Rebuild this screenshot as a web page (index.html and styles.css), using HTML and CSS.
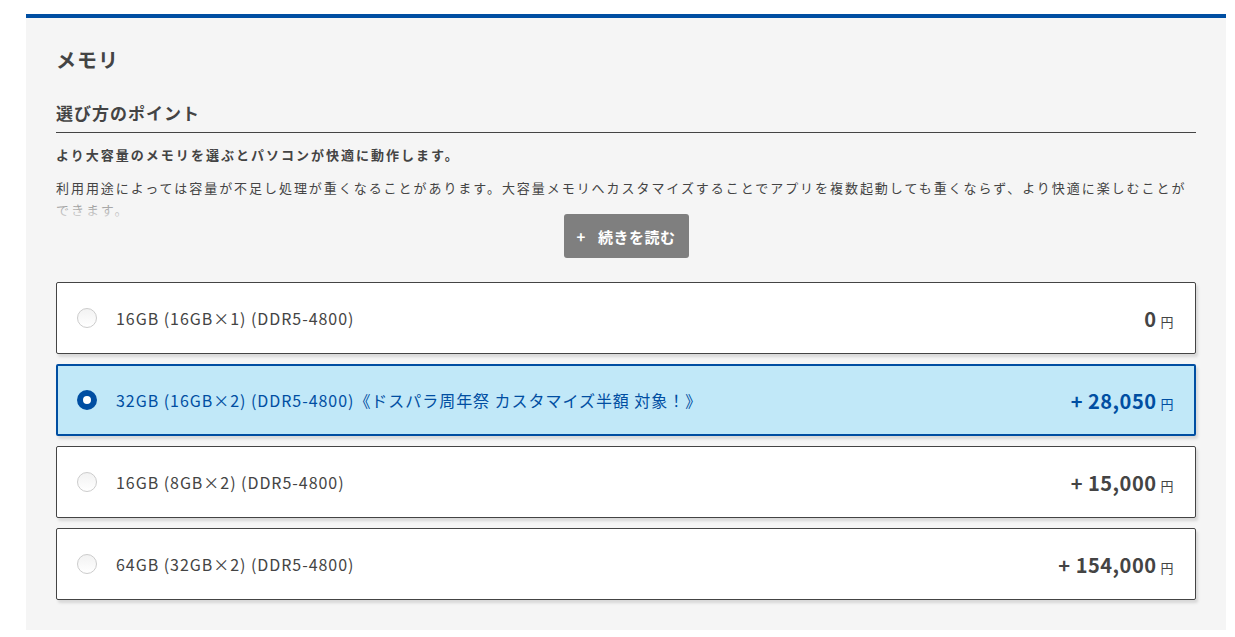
FILE: index.html
```html
<!DOCTYPE html>
<html>

<head>
    <title>メモリ</title>
    <meta charset="utf-8">
    <link rel="stylesheet" href="styles.css">
</head>

<body>
    <div class="custom-box">
        <h2 class="custom-title">メモリ</h2>
        <h3 class="point-title">選び方のポイント</h3>
        <p class="point-lead">より大容量のメモリを選ぶとパソコンが快適に動作します。</p>
        <div class="point-text">
            <p>利用用途によっては容量が不足し処理が重くなることがあります。大容量メモリへカスタマイズすることでアプリを複数起動しても重くならず、より快適に楽しむことができます。</p>
        </div>
        <div class="more-wrap">
            <button class="more-btn"><span class="plus">+</span>続きを読む</button>
        </div>
        <ul class="option-list">
            <li class="option">
                <span class="radio"></span>
                <span class="option-name">16GB (16GB×1) (DDR5-4800)</span>
                <span class="option-price">0<span class="yen">円</span></span>
            </li>
            <li class="option selected">
                <span class="radio"></span>
                <span class="option-name">32GB (16GB×2) (DDR5-4800)《ドスパラ周年祭 カスタマイズ半額 対象！》</span>
                <span class="option-price">+ 28,050<span class="yen">円</span></span>
            </li>
            <li class="option">
                <span class="radio"></span>
                <span class="option-name">16GB (8GB×2) (DDR5-4800)</span>
                <span class="option-price">+ 15,000<span class="yen">円</span></span>
            </li>
            <li class="option">
                <span class="radio"></span>
                <span class="option-name">64GB (32GB×2) (DDR5-4800)</span>
                <span class="option-price">+ 154,000<span class="yen">円</span></span>
            </li>
        </ul>
    </div>
</body>

</html>
```

FILE: styles.css
```css
body {
    margin: 0;
    background-color: #fff;
    font-family: "Noto Sans CJK JP", "Noto Sans", sans-serif;
    color: #444;
}

.custom-box {
    width: 1200px;
    margin: 14px 0 0 26px;
    padding: 27px 30px 30px;
    box-sizing: border-box;
    border-top: 4px solid #004ea2;
    background-color: #f5f5f5;
}

.custom-title {
    margin: 0;
    font-size: 20px;
    line-height: 30px;
    letter-spacing: 1px;
    font-weight: bold;
}

.point-title {
    margin: 25px 0 0;
    padding-bottom: 7px;
    border-bottom: 1px solid #444;
    font-size: 17px;
    line-height: 25px;
    letter-spacing: 1px;
    font-weight: bold;
}

.point-lead {
    margin: 11px 0 0;
    font-size: 13px;
    line-height: 22px;
    letter-spacing: 0.155em;
    font-weight: bold;
}

.point-text {
    position: relative;
    height: 44px;
    margin-top: 11px;
    overflow: hidden;
}

.point-text p {
    margin: 0;
    font-size: 13px;
    line-height: 22px;
    letter-spacing: 0.15em;
}

.point-text::after {
    content: "";
    position: absolute;
    left: 0;
    right: 0;
    bottom: 0;
    height: 24px;
    background: linear-gradient(rgba(245, 245, 245, 0.3), rgba(245, 245, 245, 0.9));
}

.more-wrap {
    position: relative;
    display: flex;
    justify-content: center;
    margin-top: -7px;
}

.more-btn {
    width: 125px;
    height: 44px;
    border: none;
    border-radius: 3px;
    background-color: #7f7f7f;
    color: #fff;
    font-family: inherit;
    font-size: 15px;
    font-weight: bold;
    letter-spacing: 0.5px;
}

.more-btn .plus {
    margin-right: 12px;
}

.option-list {
    display: flex;
    flex-direction: column;
    gap: 10px;
    margin: 24px 0 0;
    padding: 0;
    list-style: none;
}

.option {
    display: flex;
    align-items: center;
    height: 72px;
    padding: 0 21px 0 20px;
    box-sizing: border-box;
    border: 1px solid #444;
    border-radius: 2px;
    background-color: #fff;
    box-shadow: 2px 3px 3px rgba(0, 0, 0, 0.12);
}

.radio {
    width: 20px;
    height: 20px;
    box-sizing: border-box;
    border: 1px solid #ccc;
    border-radius: 50%;
    background: linear-gradient(#f2f2f2, #fff);
    flex-shrink: 0;
}

.option-name {
    flex: 1;
    margin-left: 19px;
    font-size: 16px;
    letter-spacing: 0.06em;
}

.option-price {
    font-size: 20px;
    font-weight: bold;
    letter-spacing: 0.5px;
}

.yen {
    margin-left: 4px;
    font-size: 13px;
    font-weight: normal;
}

.option.selected {
    border: 2px solid #004ea2;
    padding: 0 20px 0 19px;
    background-color: #c1e8f8;
    color: #004ea2;
}

.option.selected .radio {
    border: 6px solid #004ea2;
    background: #fff;
}
```
